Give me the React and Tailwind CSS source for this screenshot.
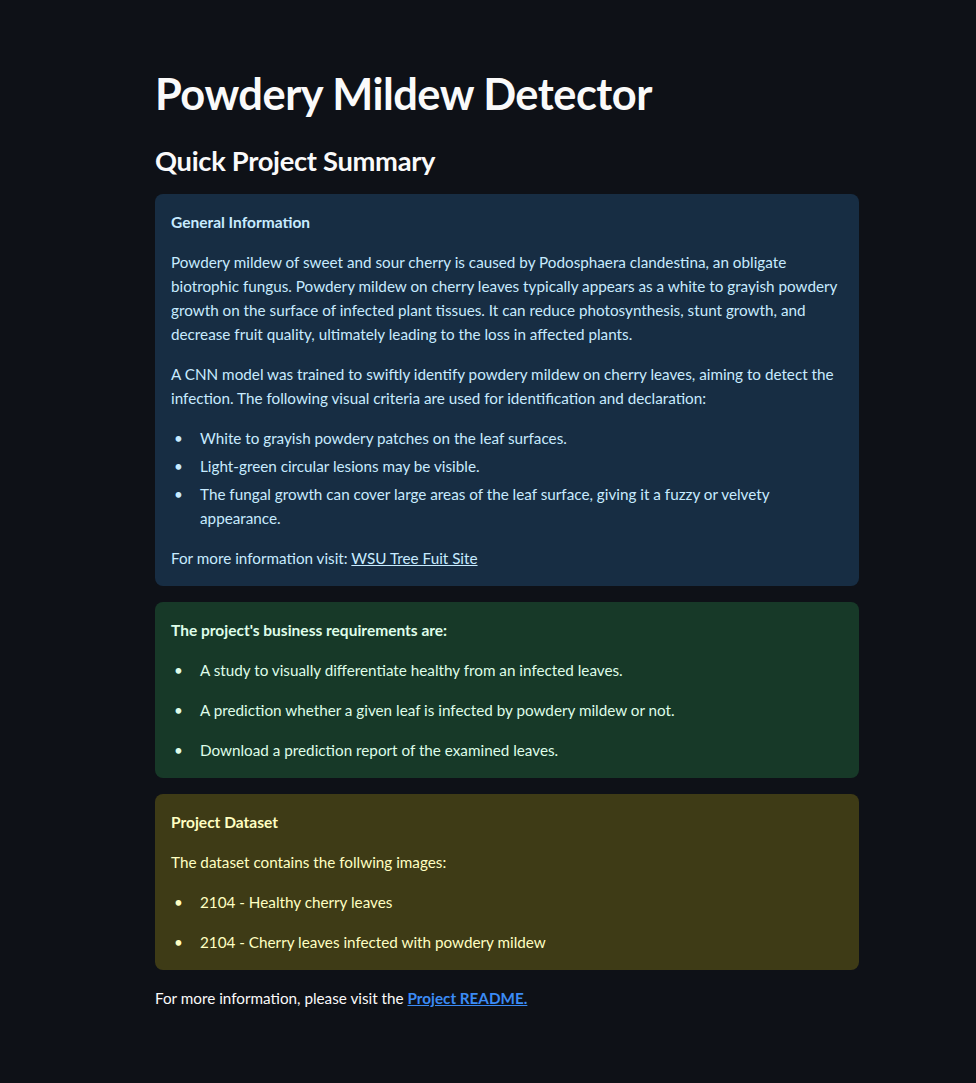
const font = { fontFamily: "Lato, 'Noto Sans', sans-serif" }

function Bullet({ children, loose }) {
  return (
    <li className={`flex ${loose ? "mb-4" : "mb-1"} last:mb-0`}>
      <span className="w-[29px] shrink-0 pl-[3px]">•</span>
      <span>{children}</span>
    </li>
  )
}

export default function App() {
  return (
    <div className="min-h-[1083px] bg-[#0e1117] text-[#fafafa]" style={font}>
      <div className="ml-[155px] w-[704px] pt-[66px] pb-16">
        <h1 className="text-[43.4px] font-bold leading-[54px] tracking-[-0.5px]">Powdery Mildew Detector</h1>
        <h3 className="mt-[21px] text-[27.3px] font-bold leading-[40px] tracking-[-0.3px]">Quick Project Summary</h3>

        <div className="mt-[13px] rounded-lg bg-[#172d43] px-4 py-4 text-[15.25px] leading-6 text-[#c7ebff]">
          <p className="font-bold text-[15.5px]">General Information</p>
          <p className="mt-4">
            Powdery mildew of sweet and sour cherry is caused by Podosphaera clandestina, an obligate biotrophic fungus.
            Powdery mildew on cherry leaves typically appears as a white to grayish powdery growth on the surface of
            infected plant tissues. It can reduce photosynthesis, stunt growth, and decrease fruit quality, ultimately
            leading to the loss in affected plants.
          </p>
          <p className="mt-4">
            A CNN model was trained to swiftly identify powdery mildew on cherry leaves, aiming to detect the infection.
            The following visual criteria are used for identification and declaration:
          </p>
          <ul className="mt-4">
            <Bullet>White to grayish powdery patches on the leaf surfaces.</Bullet>
            <Bullet>Light-green circular lesions may be visible.</Bullet>
            <Bullet>
              The fungal growth can cover large areas of the leaf surface, giving it a fuzzy or velvety appearance.
            </Bullet>
          </ul>
          <p className="mt-4">
            For more information visit: <a href="#" className="underline">WSU Tree Fuit Site</a>
          </p>
        </div>

        <div className="mt-4 rounded-lg bg-[#173928] px-4 py-4 text-[15.25px] leading-6 text-[#dffde9]">
          <p className="font-bold text-[15.5px]">The project's business requirements are:</p>
          <ul className="mt-4">
            <Bullet loose>A study to visually differentiate healthy from an infected leaves.</Bullet>
            <Bullet loose>A prediction whether a given leaf is infected by powdery mildew or not.</Bullet>
            <Bullet loose>Download a prediction report of the examined leaves.</Bullet>
          </ul>
        </div>

        <div className="mt-4 rounded-lg bg-[#3e3b16] px-4 py-4 text-[15.25px] leading-6 text-[#ffffc2]">
          <p className="font-bold text-[15.5px]">Project Dataset</p>
          <p className="mt-4">The dataset contains the follwing images:</p>
          <ul className="mt-4">
            <Bullet loose>2104 - Healthy cherry leaves</Bullet>
            <Bullet loose>2104 - Cherry leaves infected with powdery mildew</Bullet>
          </ul>
        </div>

        <p className="mt-4 text-[15.25px] leading-6">
          For more information, please visit the{" "}
          <a href="#" className="font-bold text-[#3b8bf5] underline">Project README.</a>
        </p>
      </div>
    </div>
  )
}
